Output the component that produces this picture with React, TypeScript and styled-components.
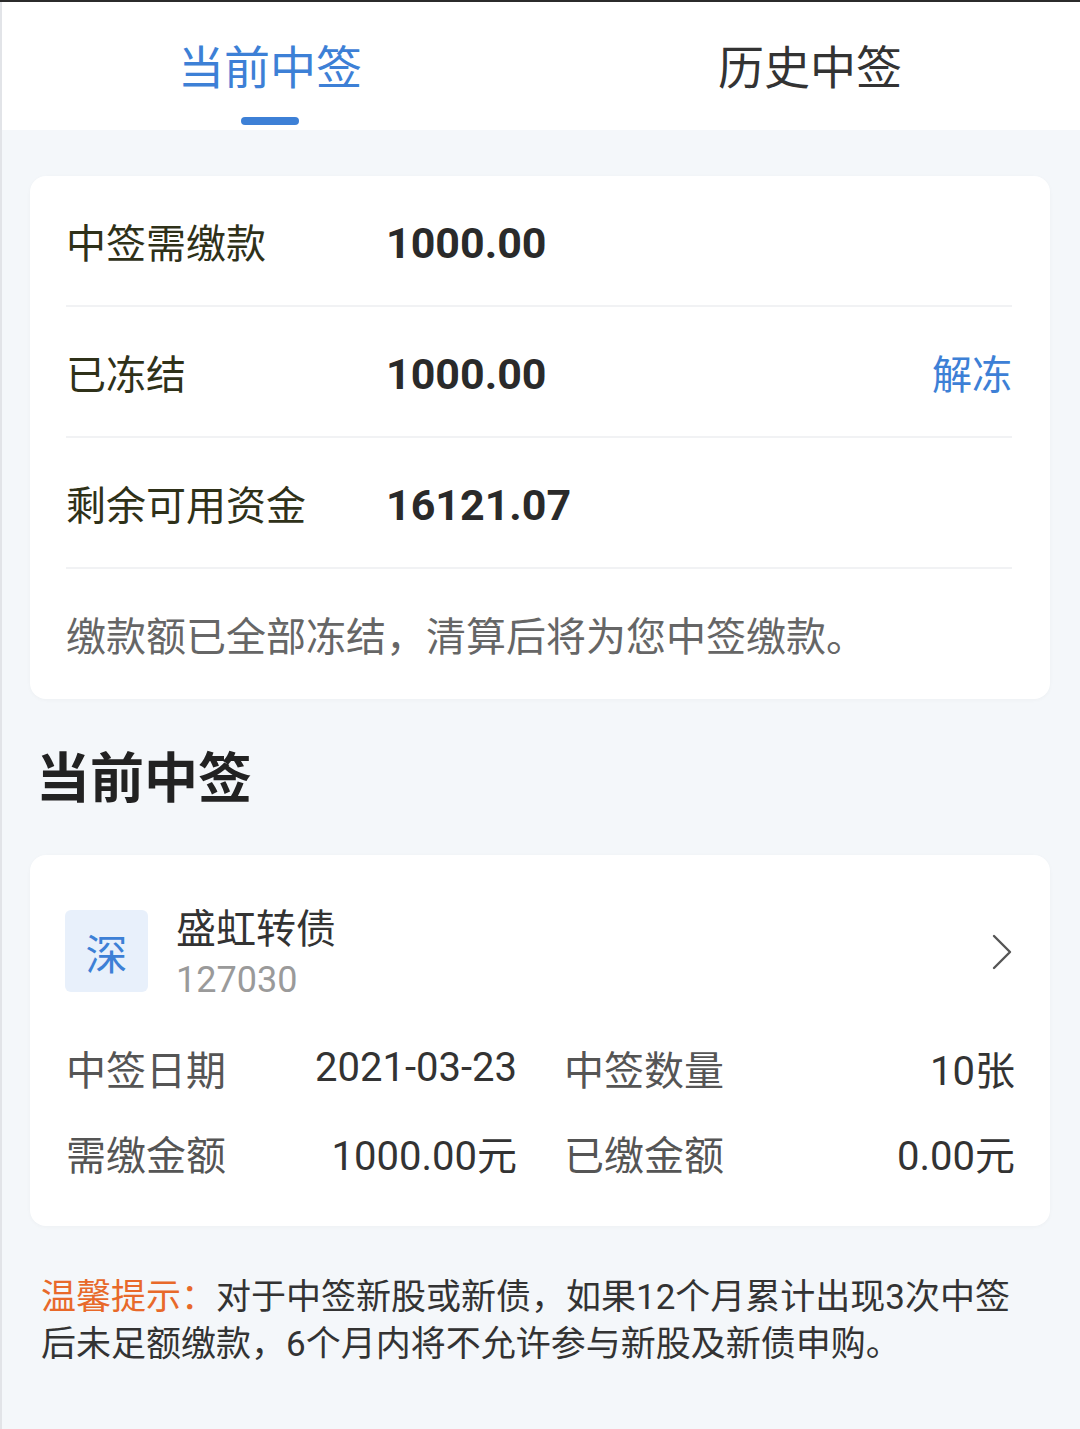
import React from "react";
import styled, { createGlobalStyle } from "styled-components";

const GlobalStyle = createGlobalStyle`
  html, body {
    margin: 0;
    padding: 0;
    background: #f4f7fa;
    font-family: Roboto, "Noto Sans CJK SC", sans-serif;
  }
`;

const Page = styled.div`
  width: 1080px;
  min-height: 1429px;
  background: #f4f7fa;
  border-top: 2px solid #2b2b2b;
  box-shadow: inset 2px 0 0 #e2e4e8;
  box-sizing: border-box;
`;

const TabBar = styled.div`
  display: flex;
  height: 128px;
  background: #ffffff;
  box-shadow: inset 2px 0 0 #e2e4e8;
`;

const Tab = styled.div<{ $active?: boolean }>`
  flex: 1;
  display: flex;
  flex-direction: column;
  align-items: center;
  padding-top: 43px;
  box-sizing: border-box;
  font-size: 46px;
  line-height: 46px;
  color: ${(p) => (p.$active ? "#3d80d6" : "#333333")};
`;

const Indicator = styled.div<{ $show?: boolean }>`
  width: 58px;
  height: 8px;
  margin-top: 26px;
  border-radius: 4px;
  background: ${(p) => (p.$show ? "#3d80d6" : "transparent")};
`;

const Card = styled.div`
  margin: 0 30px;
  background: #ffffff;
  border-radius: 16px;
  box-shadow: 0 1px 4px rgba(0, 0, 0, 0.03);
`;

const SummaryCard = styled(Card)`
  margin-top: 46px;
  padding: 0 38px 0 36px;
`;

const SummaryRow = styled.div`
  display: flex;
  align-items: center;
  height: 129px;
  border-bottom: 2px solid #f1f2f4;
`;

const SummaryLabel = styled.div`
  width: 320px;
  font-size: 40px;
  color: #2f3119;
`;

const SummaryValue = styled.div`
  flex: 1;
  font-size: 43px;
  line-height: 50px;
  padding-top: 4px;
  font-weight: 700;
  color: #2a2a2a;
`;

const Action = styled.div`
  font-size: 40px;
  color: #3d80d6;
`;

const Note = styled.div`
  height: 130px;
  display: flex;
  align-items: center;
  font-size: 40px;
  color: #666666;
`;

const Heading = styled.h2`
  margin: 54px 0 48px 36px;
  font-size: 54px;
  line-height: 54px;
  font-weight: 700;
  color: #222222;
`;

const DetailCard = styled(Card)`
  padding: 55px 35px 31px 35px;
`;

const StockHead = styled.div`
  display: flex;
  align-items: flex-start;
`;

const Badge = styled.div`
  width: 83px;
  height: 82px;
  border-radius: 6px;
  background: #e8f0fb;
  color: #3d80d6;
  font-size: 42px;
  display: flex;
  align-items: center;
  justify-content: center;
`;

const StockInfo = styled.div`
  flex: 1;
  margin: -5px 0 0 28px;
  display: flex;
  flex-direction: column;
`;

const StockName = styled.div`
  font-size: 40px;
  line-height: 50px;
  color: #333333;
`;

const StockCode = styled.div`
  font-size: 36px;
  line-height: 50px;
  color: #9a9a9a;
`;

const Chevron = styled.svg`
  width: 22px;
  height: 36px;
  margin: 24px 2px 0 0;
`;

const InfoGrid = styled.div`
  display: grid;
  grid-template-columns: 1fr 1fr;
  column-gap: 47px;
  margin-top: 20px;
  padding-left: 1px;
`;

const InfoCell = styled.div`
  display: flex;
  justify-content: space-between;
  align-items: center;
  height: 85px;
`;

const InfoLabel = styled.span`
  font-size: 40px;
  color: #555555;
`;

const InfoValue = styled.span`
  font-size: 40px;
  color: #333333;
`;

const Tip = styled.p`
  margin: 48px 40px 0 41px;
  font-size: 35px;
  line-height: 47px;
  color: #333333;
`;

const TipTitle = styled.span`
  color: #e8692a;
`;

const summary = [
  { label: "中签需缴款", value: "1000.00" },
  { label: "已冻结", value: "1000.00", action: "解冻" },
  { label: "剩余可用资金", value: "16121.07" },
];

const details = [
  { label: "中签日期", value: "2021-03-23" },
  { label: "中签数量", value: "10张" },
  { label: "需缴金额", value: "1000.00元" },
  { label: "已缴金额", value: "0.00元" },
];

const App: React.FC = () => {
  return (
    <>
      <GlobalStyle />
      <Page>
        <TabBar>
          <Tab $active>
            当前中签
            <Indicator $show />
          </Tab>
          <Tab>
            历史中签
            <Indicator />
          </Tab>
        </TabBar>

        <SummaryCard>
          {summary.map((row) => (
            <SummaryRow key={row.label}>
              <SummaryLabel>{row.label}</SummaryLabel>
              <SummaryValue>{row.value}</SummaryValue>
              {row.action && <Action>{row.action}</Action>}
            </SummaryRow>
          ))}
          <Note>缴款额已全部冻结，清算后将为您中签缴款。</Note>
        </SummaryCard>

        <Heading>当前中签</Heading>

        <DetailCard>
          <StockHead>
            <Badge>深</Badge>
            <StockInfo>
              <StockName>盛虹转债</StockName>
              <StockCode>127030</StockCode>
            </StockInfo>
            {/* right arrow */}
            <Chevron viewBox="0 0 22 36">
              <polyline
                points="3,2 19,18 3,34"
                fill="none"
                stroke="#555"
                strokeWidth="2.4"
                strokeLinecap="round"
                strokeLinejoin="round"
              />
            </Chevron>
          </StockHead>
          <InfoGrid>
            {details.map((d) => (
              <InfoCell key={d.label}>
                <InfoLabel>{d.label}</InfoLabel>
                <InfoValue>{d.value}</InfoValue>
              </InfoCell>
            ))}
          </InfoGrid>
        </DetailCard>

        <Tip>
          <TipTitle>温馨提示：</TipTitle>
          对于中签新股或新债，如果12个月累计出现3次中签后未足额缴款，6个月内将不允许参与新股及新债申购。
        </Tip>
      </Page>
    </>
  );
};

export default App;
